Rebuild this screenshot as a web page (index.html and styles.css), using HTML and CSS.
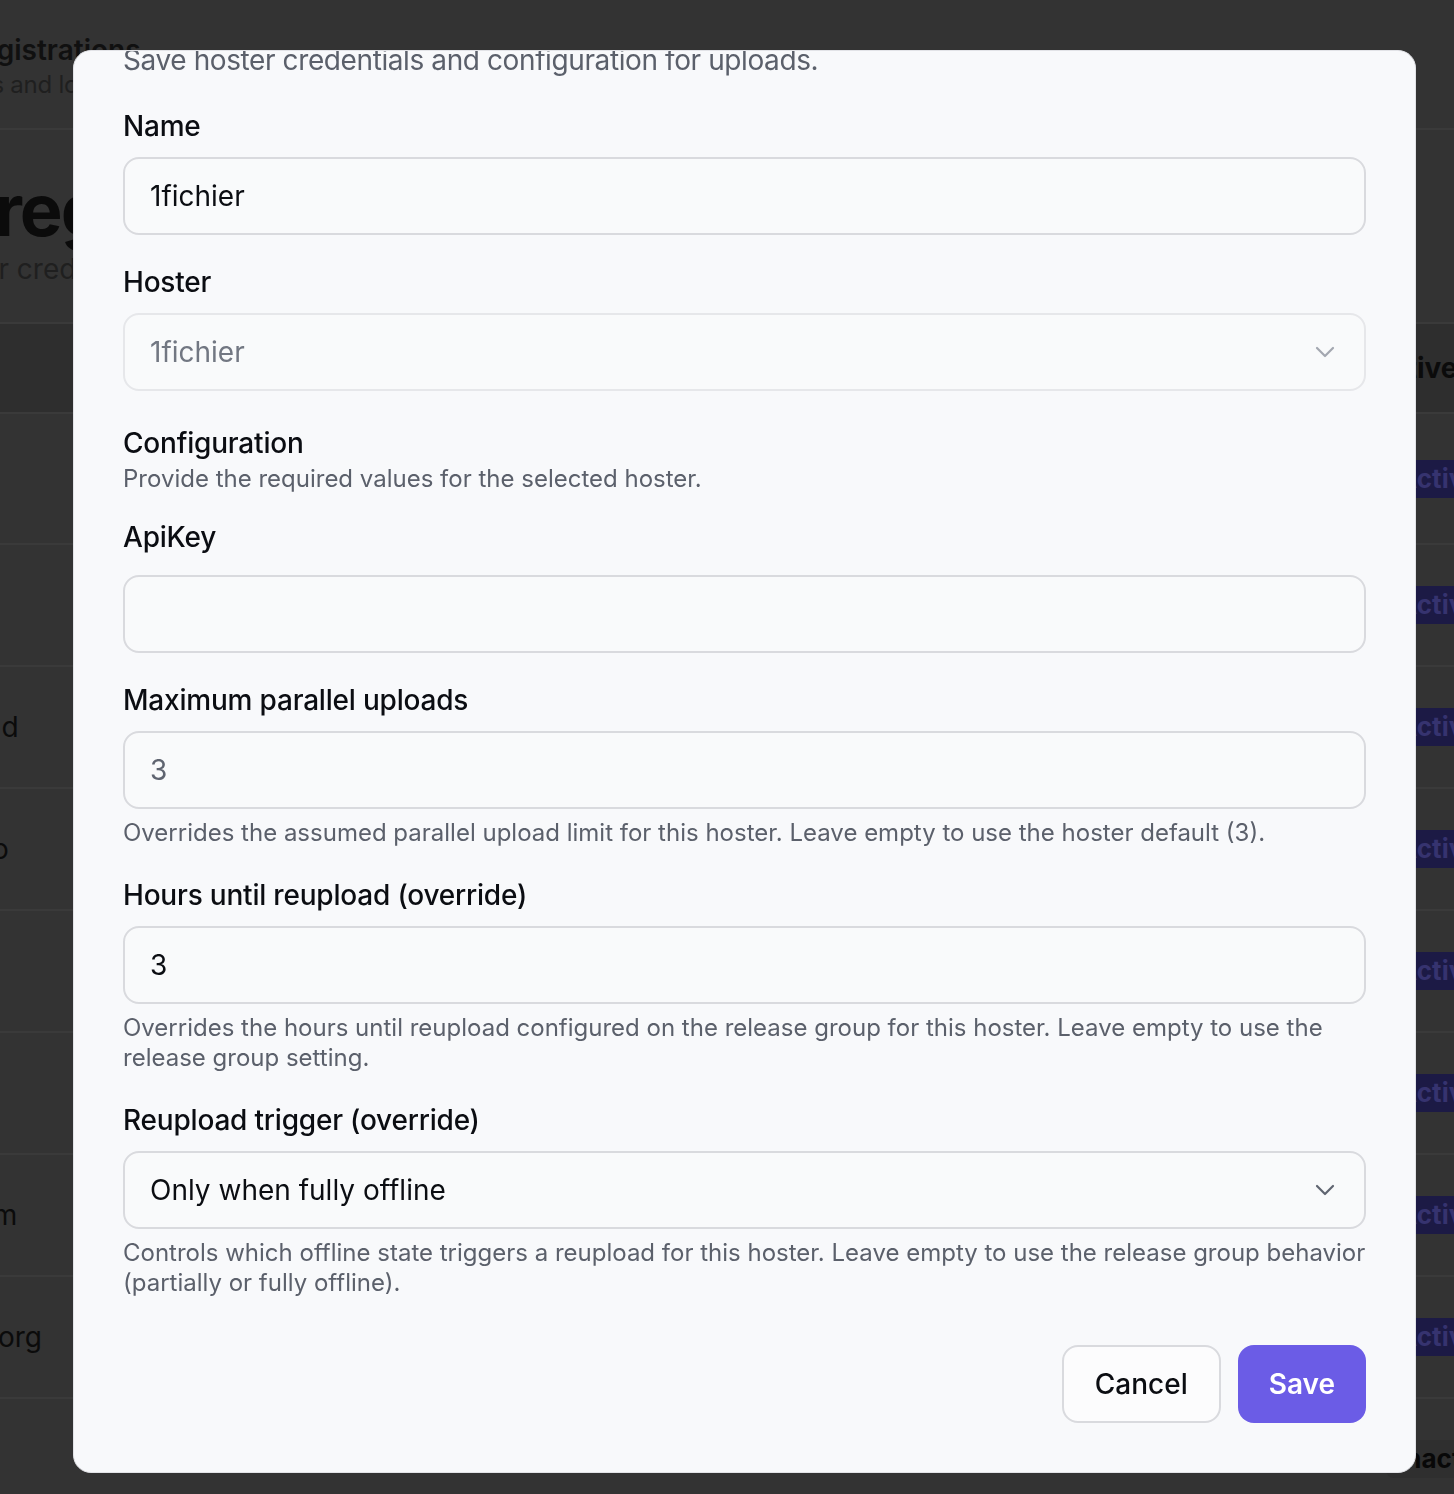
FILE: index.html
```html
<!DOCTYPE html>
<html lang="en">
<head>
    <meta charset="UTF-8">
    <meta name="viewport" content="width=device-width, initial-scale=1.0">
    <title>Hoster registrations</title>
    <link rel="stylesheet" href="styles.css">
</head>
<body>
    <div class="page">
        <header class="page-top">
            <div class="page-top-title">Hoster registrations</div>
            <div class="page-top-sub">Hoster keys and logins</div>
        </header>
        <section class="page-head">
            <h1>My registrations</h1>
            <p>Store your credentials for each hoster.</p>
        </section>
        <div class="table">
            <div class="row row-head"><span>Name</span><span>Hoster</span><span>Active</span></div>
            <div class="row"><span>1fichier</span><span>1fichier</span><span><em class="badge">Active</em></span></div>
            <div class="row"><span>mega.nz</span><span>Mega</span><span><em class="badge">Active</em></span></div>
            <div class="row"><span>ddownload</span><span>DDownload</span><span><em class="badge">Active</em></span></div>
            <div class="row"><span>uploady.io</span><span>Uploady</span><span><em class="badge">Active</em></span></div>
            <div class="row"><span>gofile.io</span><span>GoFile</span><span><em class="badge">Active</em></span></div>
            <div class="row"><span>turbobit</span><span>Turbobit</span><span><em class="badge">Active</em></span></div>
            <div class="row"><span>katfile.com</span><span>Katfile</span><span><em class="badge">Active</em></span></div>
            <div class="row"><span>dropload.org</span><span>Dropload</span><span><em class="badge">Active</em></span></div>
            <div class="row"><span>send.cm</span><span>Send</span><span><em class="badge badge-off">Inactive</em></span></div>
        </div>
    </div>

    <div class="overlay">
        <div class="modal">
            <p class="modal-desc">Save hoster credentials and configuration for uploads.</p>

            <form class="form" onsubmit="return false">
                <div class="field">
                    <label for="name">Name</label>
                    <input class="input" id="name" type="text" value="1fichier">
                </div>

                <div class="field">
                    <label for="hoster">Hoster</label>
                    <div class="select-wrap">
                        <select class="input select" id="hoster" disabled>
                            <option>1fichier</option>
                        </select>
                        <svg class="chevron" width="20" height="12" viewBox="0 0 20 12"><path d="M2 2l8 8 8-8" fill="none" stroke="currentColor" stroke-width="2.2" stroke-linecap="round" stroke-linejoin="round"/></svg>
                    </div>
                </div>

                <div class="config-head">
                    <h3>Configuration</h3>
                    <p>Provide the required values for the selected hoster.</p>
                </div>

                <div class="field field-dynamic">
                    <label for="apikey">ApiKey</label>
                    <input class="input" id="apikey" type="text">
                </div>

                <div class="field">
                    <label for="parallel">Maximum parallel uploads</label>
                    <input class="input" id="parallel" type="text" placeholder="3">
                    <p class="help">Overrides the assumed parallel upload limit for this hoster. Leave empty to use the hoster default (3).</p>
                </div>

                <div class="field">
                    <label for="hours">Hours until reupload (override)</label>
                    <input class="input" id="hours" type="text" value="3">
                    <p class="help">Overrides the hours until reupload configured on the release group for this hoster. Leave empty to use the release group setting.</p>
                </div>

                <div class="field">
                    <label for="trigger">Reupload trigger (override)</label>
                    <div class="select-wrap">
                        <select class="input select" id="trigger">
                            <option>Only when fully offline</option>
                            <option>Partially or fully offline</option>
                        </select>
                        <svg class="chevron chevron-dark" width="20" height="12" viewBox="0 0 20 12"><path d="M2 2l8 8 8-8" fill="none" stroke="currentColor" stroke-width="2.2" stroke-linecap="round" stroke-linejoin="round"/></svg>
                    </div>
                    <p class="help">Controls which offline state triggers a reupload for this hoster. Leave empty to use the release group behavior (partially or fully offline).</p>
                </div>

                <div class="actions">
                    <button type="button" class="btn btn-cancel">Cancel</button>
                    <button type="submit" class="btn btn-save">Save</button>
                </div>
            </form>
        </div>
    </div>

    <script>
        // Put the cursor at the end of the name field
        const nameInput = document.getElementById('name');
        nameInput.focus();
        nameInput.setSelectionRange(nameInput.value.length, nameInput.value.length);
    </script>
</body>
</html>
```

FILE: styles.css
```css
body {
    margin: 0;
    height: 1494px;
    overflow: hidden;
    background-color: #333333;
    font-family: Inter, "Noto Sans", sans-serif;
}

/* page behind the dialog, already dimmed */
.page {
    margin-left: -128px;
    width: 1728px;
    color: #0b0b0b;
}

.page-top {
    padding: 32px 0 26px;
    border-bottom: 2px solid #3a3a3a;
}

.page-top-title {
    font-size: 28px;
    font-weight: 600;
    line-height: 36px;
    color: #101010;
}

.page-top-sub {
    font-size: 24px;
    line-height: 34px;
    letter-spacing: -0.25px;
    color: #1f1f1f;
}

.page-head {
    padding: 44px 0 35px;
}

.page-head h1 {
    margin: 0;
    font-size: 72px;
    line-height: 72px;
    font-weight: 700;
    letter-spacing: -2px;
}

.page-head p {
    margin: 5px 0 0;
    font-size: 28px;
    line-height: 36px;
    color: #1f1f1f;
}

.row {
    display: grid;
    grid-template-columns: 148px 1fr 230px;
    align-items: center;
    height: 122px;
    box-sizing: border-box;
    border-bottom: 2px solid #3a3a3a;
    font-size: 28px;
}

.row span:nth-child(2) {
    padding-left: 140px;
}

.row:nth-child(2) {
    height: 131px;
}

.row-head {
    height: 92px;
    border-top: 2px solid #3a3a3a;
    background-color: #2e2e2e;
    font-weight: 700;
}

.badge {
    display: inline-block;
    margin-left: 16px;
    padding: 0 12px;
    line-height: 38px;
    border-radius: 8px;
    font-style: normal;
    font-weight: 700;
    font-size: 26px;
    background-color: #1c1a45;
    color: #36336f;
}

.badge-off {
    background-color: #2f2f2f;
    color: #080808;
}

/* dialog */
.overlay {
    position: fixed;
    inset: 0;
    padding: 50px 0 0 73px;
}

.modal {
    width: 1343px;
    box-sizing: border-box;
    padding: 0 49px 49px;
    background-color: #f8f9fb;
    border: 1px solid #e2e3e7;
    border-radius: 18px;
    overflow: hidden;
}

.modal-desc {
    margin: -11px 0 0;
    font-size: 28px;
    line-height: 40px;
    letter-spacing: -0.4px;
    color: #5b606b;
}

.form {
    display: flex;
    flex-direction: column;
    gap: 29px;
    margin-top: 28px;
}

.field label {
    display: block;
    margin-bottom: 13px;
    font-size: 28px;
    font-weight: 500;
    line-height: 36px;
    letter-spacing: -0.2px;
    color: #0b0d12;
}

.field-dynamic {
    margin-top: -4px;
}

.field-dynamic label {
    margin-bottom: 20px;
}

.input {
    display: block;
    width: 100%;
    height: 78px;
    box-sizing: border-box;
    padding: 0 25px;
    border: 2px solid #d9dade;
    border-radius: 16px;
    background-color: #f9fafb;
    font-family: Inter, "Noto Sans", sans-serif;
    font-size: 28px;
    color: #0b0d12;
    outline: none;
    caret-color: #000;
}

.input::placeholder {
    color: #5f6470;
}

.select-wrap {
    position: relative;
}

.select {
    appearance: none;
    -webkit-appearance: none;
    padding-right: 70px;
}

.select:disabled {
    color: #727782;
    border-color: #e6e7ea;
    opacity: 1;
}

.chevron {
    position: absolute;
    right: 31px;
    top: 33px;
    color: #a3a7b0;
    pointer-events: none;
}

.chevron-dark {
    color: #5f6470;
}

.help {
    margin: 9px 0 0;
    font-size: 24px;
    line-height: 30px;
    color: #5b606b;
}

.config-head {
    margin-top: 5px;
}

.config-head h3 {
    margin: 0;
    font-size: 28px;
    font-weight: 500;
    line-height: 36px;
    letter-spacing: -0.2px;
    color: #0b0d12;
}

.config-head p {
    margin: 3px 0 0;
    font-size: 24px;
    line-height: 30px;
    color: #5b606b;
}

.actions {
    display: flex;
    justify-content: flex-end;
    gap: 17px;
    margin-top: 18px;
}

.btn {
    height: 78px;
    padding: 0 31px;
    border: 2px solid transparent;
    border-radius: 16px;
    font-family: Inter, "Noto Sans", sans-serif;
    font-size: 28px;
    font-weight: 500;
    cursor: pointer;
}

.btn-cancel {
    background-color: #fcfcfd;
    border-color: #d9dade;
    color: #0b0d12;
}

.btn-save {
    padding: 0 29px;
    background-color: #6b5ce6;
    color: #ffffff;
    font-weight: 600;
}
```
